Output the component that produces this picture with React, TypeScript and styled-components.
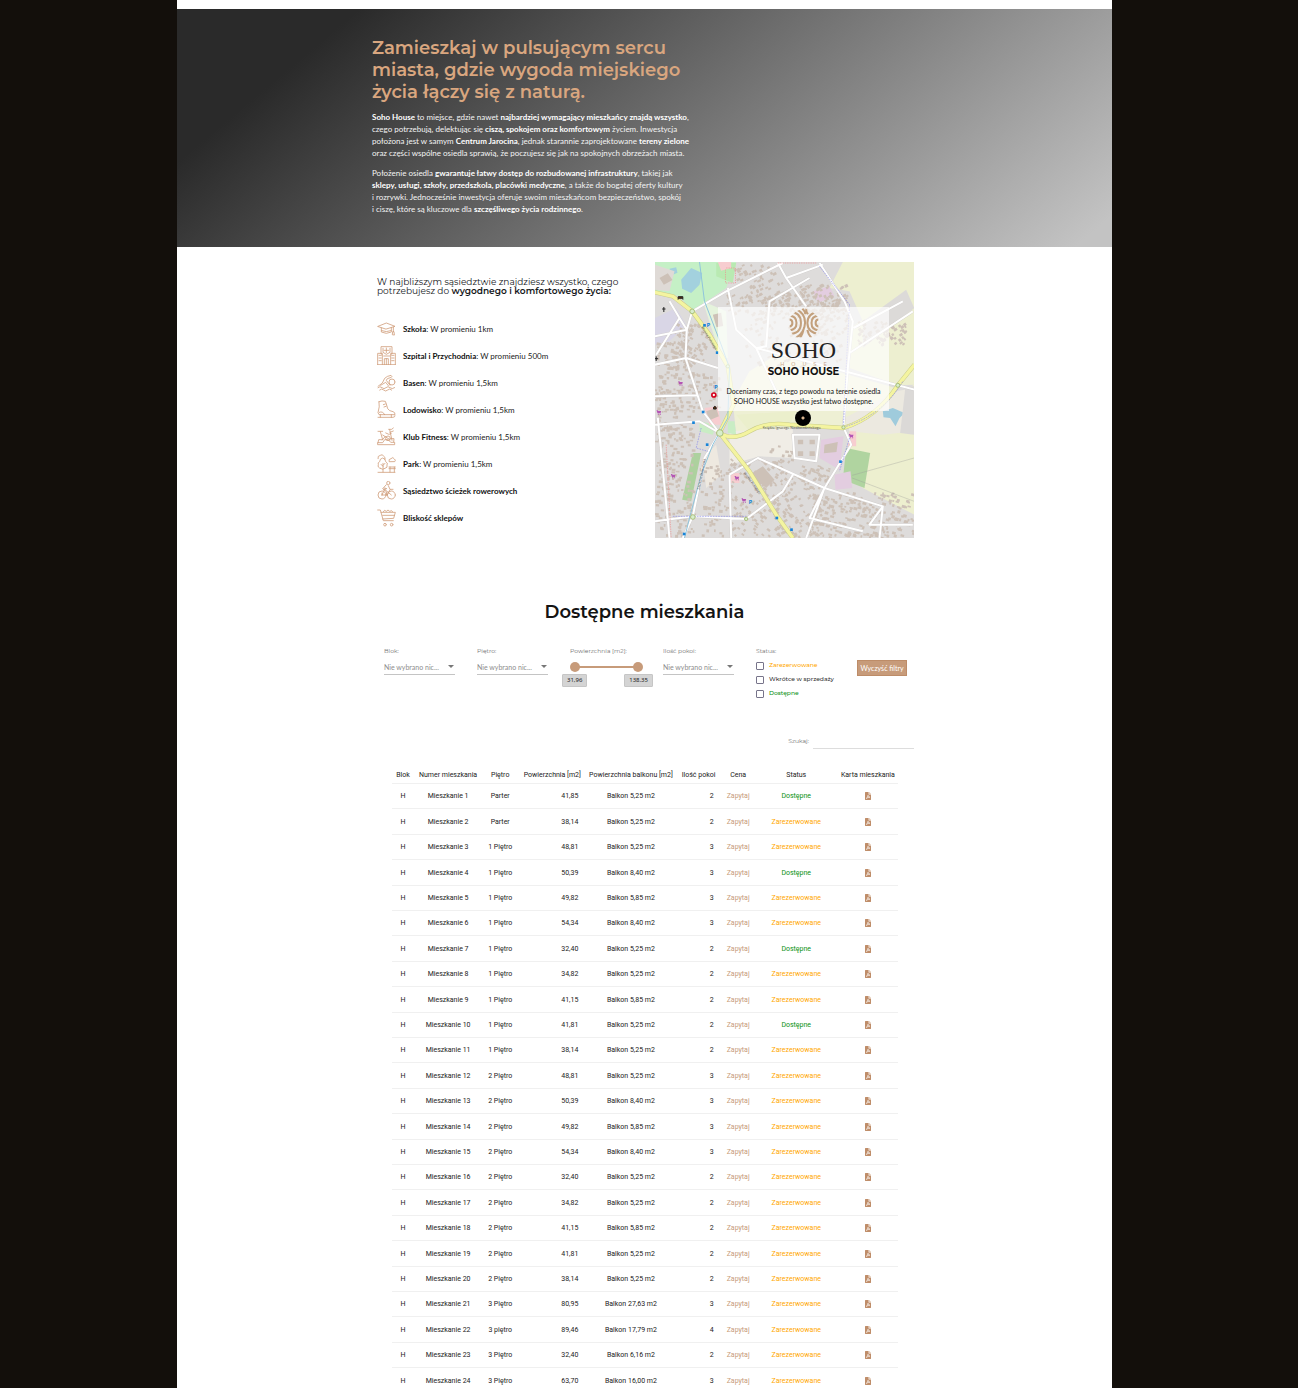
import React, { useState } from "react";
import styled, { createGlobalStyle } from "styled-components";

const display = `Montserrat, Inter, "Open Sans", sans-serif`;
const body = `Lato, "Open Sans", sans-serif`;
const tan = "#c79b7a";

const GlobalStyle = createGlobalStyle`
  * { box-sizing: border-box; }
  body { margin: 0; background: #130f0b; font-family: ${body}; }
  h1, h2, h3, p, ul { margin: 0; padding: 0; }
`;

const Shell = styled.div`
  padding: 0 186px 0 177px;
  @media (max-width: 960px) { padding: 0; }
`;
const Page = styled.main`
  background: #fff;
  padding-top: 9px;
`;
const Container = styled.div`
  max-width: 545px;
  margin: 0 auto;
`;

const Hero = styled.section`
  padding: 28px 0 32px;
  background: linear-gradient(140deg, #2a2a2a 15%, #c3c3c3 97%);
`;
const HeroTitle = styled.h1`
  color: #d9a67f;
  font: 600 18px/22px ${display};
  white-space: nowrap;
`;
const HeroText = styled.p`
  margin-top: 8px;
  color: #f4f4f4;
  font-size: 8px;
  line-height: 12px;
  white-space: nowrap;
  b { color: #fff; }
`;

const Nearby = styled.section`
  padding-top: 15px;
`;
const NearbyRow = styled(Container)`
  display: flex;
  justify-content: space-between;
  align-items: flex-start;
  padding: 0 3px 0 5px;
`;
const NearbyTitle = styled.h3`
  margin-top: 15px;
  color: #16181b;
  font: 400 9px/9px ${display};
  white-space: nowrap;
  b { font-weight: 600; }
`;
const PlaceList = styled.ul`
  margin-top: 20px;
  list-style: none;
`;
const Place = styled.li`
  display: flex;
  align-items: center;
  gap: 7px;
  height: 27px;
  color: #222;
  font-size: 8px;
  b { color: #111; }
`;
const PlaceIcon = styled.svg`
  width: 19px;
  height: 19px;
  fill: none;
  stroke: #cf9c78;
  stroke-width: 2.4;
  stroke-linejoin: round;
  stroke-linecap: round;
`;

const MapCard = styled.div`
  position: relative;
  flex: 0 0 auto;
  width: 259px;
  height: 276px;
  overflow: hidden;
`;
const MapArt = styled.svg`
  display: block;
  width: 100%;
  height: 100%;
`;
const MapPopup = styled.div`
  position: absolute;
  top: 45px;
  left: 63px;
  width: 171px;
  height: 104px;
  display: flex;
  flex-direction: column;
  align-items: center;
  padding-top: 1px;
  background: rgba(255, 255, 255, 0.68);
  color: #111;
  text-align: center;
`;
const LogoMark = styled.svg`
  width: 30px;
  height: 30px;
`;
const LogoName = styled.span`
  color: #222;
  font: 400 24px/24px "Liberation Serif", serif;
`;
const LogoSub = styled.span`
  color: #c9a88b;
  font: 500 5px/4px ${display};
  letter-spacing: 7px;
  padding-left: 7px;
`;
const PopupTitle = styled.h3`
  font: 700 10px/11px ${display};
`;
const PopupText = styled.p`
  margin-top: 9px;
  font-size: 7px;
  line-height: 10px;
  white-space: nowrap;
`;
const Pin = styled.span`
  position: absolute;
  top: 148px;
  left: 140px;
  width: 16px;
  height: 16px;
  border-radius: 50%;
  background: radial-gradient(circle, #d9b48f 0 1px, #000 2px);
`;

const Flats = styled.section`
  padding-top: 62px;
`;
const FlatsTitle = styled.h2`
  color: #141414;
  text-align: center;
  font: 600 18px/24px ${display};
`;
const Filters = styled.form`
  display: grid;
  grid-template-columns: repeat(5, 93px) 1fr;
  margin-top: 22px;
  padding-left: 12px;
  height: 60px;
`;
const Field = styled.div`
  display: flex;
  flex-direction: column;
  align-items: flex-start;
  min-width: 0;
  color: #6e6e6e;
  font: 400 6px/10px ${display};
`;
const StatusField = styled.fieldset`
  margin: 0;
  padding: 0;
  border: 0;
  color: #6e6e6e;
  font: 400 6px/10px ${display};
  legend { padding: 0; margin-bottom: 2px; }
`;
const SelectBox = styled.span`
  position: relative;
  width: 71px;
  margin-top: 5px;
  border-bottom: 1px solid #c4c4c4;
  &::after {
    content: "";
    position: absolute;
    top: 4px;
    right: 1px;
    border: 3px solid transparent;
    border-top-color: #777;
    border-bottom: 0;
  }
`;
const Select = styled.select`
  appearance: none;
  display: block;
  width: 100%;
  height: 13px;
  padding: 0;
  border: 0;
  background: none;
  color: #8d8d8d;
  font: 400 7px/13px ${body};
`;
const Slider = styled.div`
  position: relative;
  width: 73px;
  height: 12px;
  margin-top: 5px;
  background: linear-gradient(${tan}, ${tan}) center / 63px 2px no-repeat;
`;
const Range = styled.input`
  appearance: none;
  position: absolute;
  inset: 0;
  width: 100%;
  height: 12px;
  margin: 0;
  background: none;
  pointer-events: none;
  &::-webkit-slider-thumb {
    appearance: none;
    width: 10px;
    height: 10px;
    border-radius: 50%;
    background: ${tan};
    pointer-events: auto;
  }
`;
const Bubbles = styled.div`
  display: flex;
  justify-content: space-between;
  align-self: stretch;
  margin: 1px 10px 0 -8px;
`;
const Bubble = styled.output`
  padding: 0 4px;
  border: 1px solid #c6c6c6;
  border-radius: 1px;
  background: #d4d4d4;
  color: #222;
  font: 400 6px/11px "Noto Sans", sans-serif;
`;
const colors = { free: "#0a9212", taken: "#ffa800", soon: "#333" };
type Tone = keyof typeof colors;
const Check = styled.label<{ $tone: Tone }>`
  display: flex;
  align-items: center;
  gap: 5px;
  height: 14px;
  color: ${(p) => colors[p.$tone]};
  font-weight: 500;
  white-space: nowrap;
  input {
    appearance: none;
    width: 8px;
    height: 8px;
    margin: 2px 0 0;
    border: 1px solid #77748a;
    border-radius: 1px;
    background: #fff;
  }
  input:checked { background: ${tan}; }
`;
const ClearButton = styled.button`
  justify-self: start;
  align-self: start;
  width: 50px;
  height: 16px;
  margin: 14px 0 0 8px;
  padding: 0;
  border: 1px solid #bd8c68;
  background: ${tan};
  color: #fff;
  font: 400 7px/12px ${body};
  white-space: nowrap;
`;
const Search = styled.label`
  display: flex;
  justify-content: flex-end;
  align-items: center;
  gap: 4px;
  margin-top: 26px;
  padding-right: 3px;
  color: #6e6e6e;
  font: 400 6px/10px ${display};
  input {
    width: 101px;
    height: 17px;
    padding: 0;
    border: 0;
    border-bottom: 1px solid #ddd;
    outline: 0;
    font: 400 7px/10px ${body};
  }
`;

const Table = styled.table`
  width: calc(100% - 39px);
  margin: 17px 19px 0 20px;
  border-collapse: separate;
  border-spacing: 0;
  table-layout: fixed;
  color: #222;
  font: 400 7px/10px Roboto, sans-serif;
  th, td {
    padding: 0;
    border-bottom: 1px solid #f0f0f0;
    text-align: center;
    font-weight: 400;
    white-space: nowrap;
  }
  th { height: 18px; }
  td { height: 25px; }
  tbody tr:nth-child(5n + 2) td,
  tbody tr:nth-child(5n + 4) td { height: 26px; }
`;
const NumberCell = styled.td`
  && { padding-right: 8px; text-align: right; }
`;
const Ask = styled.a`
  color: ${tan};
  text-decoration: none;
`;
const Status = styled.span<{ $tone: Tone }>`
  color: ${(p) => colors[p.$tone]};
`;
const FileLink = styled.a`
  display: flex;
  justify-content: center;
  svg { width: 6px; height: 8px; }
`;

const places: { icon: string; name: string; note?: string }[] = [
  { icon: "M3 22 28 12 54 22 28 30ZM13 27v12q15 8 30 0V26M14 35q14 6 28 0M49 24v14M46 46l1-8h4l1 9Z", name: "Szkoła", note: "W promieniu 1km" },
  { icon: "M16 56V24h-4V2h33v22h-4v32M2 56V22h14M55 56V22H41M2 56h53M28 6v14M21 13h14M18 7v12l10 6 11-6V7M6 28h7M6 36h7M6 44h7M44 28h7M44 36h7M44 44h7M22 56V38h12v18M28 38v18M20 30h18", name: "Szpital i Przychodnia", note: "W promieniu 500m" },
  { icon: "M3 40 16 30 23 16Q30 9 42 7q5 3 1 6L31 17 28 22 39 37M11 37l15-9 8 10M54 27a9 9 0 1 1-18 0 9 9 0 0 1 18 0M3 44q6-6 12 0t12 0 12 0 14 0M8 51q6-6 12 0t12 0 12 0", name: "Basen", note: "W promieniu 1,5km" },
  { icon: "M6 5q9-4 19-1l3 8 4 14q4 7 16 9 7 2 6 9H6l-3-6Q9 20 6 5M7 37q10-5 16 7M25 12l-6 2M27 19l-6 2M10 44v8M43 44v8M3 52h45q6 0 6-5", name: "Lodowisko", note: "W promieniu 1,5km" },
  { icon: "M3 13h14M10 14l7 24H5l-2 9M17 24 39 38M35 7h9l5-4M38 8l7 32M26 18q11 8 17 2M49 12l-10 4M3 47h14l6-9h11l7 8h12v7H3ZM40 34a7 7 0 1 1-14 0 7 7 0 0 1 14 0M25 28l-9 11M42 35h9l-1 10", name: "Klub Fitness", note: "W promieniu 1,5km" },
  { icon: "M3 14q-2-9 7-10 7-5 10 3 7 3 4 9M18 54V28M10 43q-9-2-6-11-3-6 4-9 0-9 9-11 9 2 9 11 8 4 4 10 3 8-6 10Q17 49 10 43M18 37l-6-6M18 34l6-6M3 55h51M36 22q-2-7 6-8 6-7 10 1 6 3 2 7ZM36 44h19M36 39h19M39 39v15M52 39v15", name: "Park", note: "W promieniu 1,5km" },
  { icon: "M27 42a12 12 0 1 1-24 0 12 12 0 0 1 24 0M55 42a12 12 0 1 1-24 0 12 12 0 0 1 24 0M15 42l8-17 20 17M15 42h16l8-16M39 6a5 5 0 1 1-10 0 5 5 0 0 1 10 0M28 11 17 23l12 10-1 9M34 14l5 11h9M29 23l-6-2M20 24h6M15 36v6", name: "Sąsiedztwo ścieżek rowerowych" },
  { icon: "M2 6h8l9 32h30M12 13h43l-5 18-33 2M17 22h35M19 11q3-8 9-1 5-8 10 0 7-5 9 1M28 50a4 4 0 1 1-8 0 4 4 0 0 1 8 0M48 50a4 4 0 1 1-8 0 4 4 0 0 1 8 0", name: "Bliskość sklepów" },
];

/* Street map: blocks, fields, roads and small houses */
const houses: { x: number; y: number; w: number; h: number; r: number }[] = [];
(() => {
  let seed = 11;
  const rnd = () => (seed = (seed * 16807) % 2147483647) / 2147483647;
  const zones = [
    [230, 110, 330, 60, -25, 130], [270, 150, 300, 180, -25, 110], [16, 330, 115, 500, 3, 300], [60, 190, 110, 130, 30, 90],
    [20, 250, 90, 80, 8, 50], [240, 600, 180, 230, 38, 170], [380, 710, 130, 125, -30, 80], [490, 700, 300, 135, 15, 220],
    [620, 190, 150, 70, -35, 80], [130, 340, 80, 110, 5, 40], [150, 620, 80, 210, 5, 60], [440, 80, 150, 150, -28, 110],
    [360, 560, 70, 50, 10, 12], [280, 60, 140, 80, -28, 50], [250, 20, 120, 50, -28, 30], [420, 620, 120, 70, 18, 50],
  ];
  zones.forEach(([x, y, w, h, r, n]) => {
    for (let i = 0; i < n; i++)
      houses.push({ x: Math.round(x + rnd() * w), y: Math.round(y + rnd() * h), w: 5 + Math.round(rnd() * 7), h: 5 + Math.round(rnd() * 4), r });
  });
})();

const whiteRoads = [
  "M128 160 230 100 400 15", "M128 160 112 215 108 300 160 460 210 525", "M16 235 112 215", "M16 320 110 300 205 330",
  "M16 415 145 412", "M16 500 150 490 210 525", "M25 480 60 840", "M235 90 260 215 320 270 380 400", "M320 270 350 265 360 130 480 60",
  "M385 15 410 60 470 145 M410 60 520 20", "M510 15 585 130 610 190 595 330 582 508", "M320 270 745 382", "M600 285 790 160", "M612 210 760 130",
  "M210 525 165 600 130 775 100 840", "M16 790 130 775 290 783 400 700 430 650", "M582 508 605 560 525 690 470 840",
  "M240 650 325 600 525 690 700 745 690 840", "M240 650 245 840", "M525 690 480 780 640 820M700 745 660 800 790 800", "M745 382 795 395",
  "M60 130 90 180 112 215M90 180 20 290", "M430 530 510 530 500 610 435 600Z",
];
const yellowRoads = [
  "M16 103 70 115 128 160 180 230 235 325 252 440 210 525", "M210 525Q250 550 300 520T420 500L582 510Q680 480 745 382L795 320", "M210 525 300 640 380 770 430 840",
];

function MapPicture() {
  return (
    <MapArt viewBox="16 12 778 828" preserveAspectRatio="xMidYMid slice" role="img" aria-label="Mapa okolicy">
      <rect x="16" y="12" width="778" height="828" fill="#dedcdb" />
      <path d="M580 12H794V100L640 190 600 100 540 90Z" fill="#edefd0" />
      <path d="M610 205 794 90V380L745 382 600 330Z" fill="#edefd0" />
      <path d="M640 190 770 95 794 150 640 270Z" fill="#dcdad8" />
      <path d="M600 520 794 380V770L640 690 590 640Z" fill="#edefcf" />
      <path d="M380 290 740 390 680 480 582 508 460 505 260 530 250 430 300 340Z" fill="#eef0d4" />
      <path d="M260 470 440 460 420 500 300 520Z" fill="#ebefcc" />
      <path d="M585 480 740 400 794 390V520L700 530 600 520Z" fill="#ece9e0" />
      <path d="M16 12H260L230 90 128 160 90 115 16 100Z" fill="#c5f0c6" />
      <path d="M200 15h60l-10 60-50-20Z" fill="#b9eab2" />
      <path d="M95 65 125 30 158 45 150 80 125 105 98 92ZM60 32l20-4 4 16-18 8Z" fill="#a3d1de" />
      <path d="M16 20 75 40 60 100 16 95Z" fill="#dfdad6" />
      <path d="M16 180 80 150 110 200 60 250 16 260Z" fill="#d9d6e6" />
      <path d="M160 130 230 160 235 300 215 300Z" fill="#e5f3dc" />
      <path d="M240 520 430 510 430 600 330 595 240 620Z" fill="#f0ede6" />
      <path d="M160 600 200 560 215 650 170 690Z" fill="#eee9e0" />
      <path d="M130 585H155L125 730 98 725Z" fill="#add19e" />
      <path d="M590 570 662 585 645 690 580 665Z" fill="#b0d4a0" />
      <path d="M515 545 582 535 570 635 510 600ZM555 650l48-10 5 50-50 5Z" fill="#e3cde0" />
      <path d="M490 100l50-15 15 30-50 20Z" fill="#e3cde0" />
      <path d="M150 490 200 500 190 530 150 520ZM235 490l20 0 5 40-25-5Z" fill="#c9edc4" />
      <path d="M165 450 205 445 215 500 180 500ZM240 645l30 0 0 30-30 0ZM600 520l20 0 0 45-25 0ZM205 12l40 0 0 18-30 8Z" fill="#f7cdd0" />
      <path d="M700 460 730 450 765 465 750 480 738 505 722 480 702 478Z" fill="#9fcbdc" />
      <path d="M768 385H794V530L752 525Z" fill="#dbd9d7" />
      <g fill="#cdc1b7">
        {houses.map((b, i) => (
          <rect key={i} x={b.x} y={b.y} width={b.w} height={b.h} transform={`rotate(${b.r} ${b.x} ${b.y})`} />
        ))}
        <path d="M300 650 340 625 375 665 350 690ZM445 545h16v14h-16ZM480 545h16v14h-16ZM445 580h16v14h-16ZM480 580h16v14h-16ZM170 460l30-10 8 25-28 12ZM190 170l25-6 6 40-20 4ZM525 560l40-8-4 30-38 4ZM30 60l25-14 14 20-26 14Z" />
      </g>
      <g fill="none" strokeLinejoin="round">
        <path d={whiteRoads.join("")} stroke="#cfcccb" strokeWidth="8" />
        <path d={whiteRoads.join("")} stroke="#fff" strokeWidth="6" />
        <path d={yellowRoads.join("")} stroke="#c9cc8a" strokeWidth="13" />
        <path d={yellowRoads.join("")} stroke="#f4f4a0" strokeWidth="10" />
        <path d="M150 12 165 130 215 260 240 330 235 480 190 560 155 650 120 780 105 840" stroke="#8fc4dc" strokeWidth="3" />
        <path d="M510 25 600 140 590 330 582 500M600 540 570 640M155 510 140 570 175 580M70 775H290M590 505Q700 470 760 370" stroke="#8b8bea" strokeWidth="2" strokeDasharray="5 3" />
        <path d="M50 560 65 840M385 15 500 15M230 30h28v45h-30v-40" stroke="#ee8f8f" strokeWidth="2" strokeDasharray="4 3" />
        <path d="M608 652 794 600M608 660 794 730" stroke="#999" strokeWidth="1" />
      </g>
      <g fill="#d8eecb" stroke="#a9bf7a" strokeWidth="3">
        <circle cx="128" cy="160" r="7" /><circle cx="211" cy="525" r="10" /><circle cx="130" cy="777" r="7" />
        <circle cx="235" cy="325" r="5" /><circle cx="582" cy="508" r="5" /><circle cx="745" cy="382" r="6" /><circle cx="290" cy="783" r="5" />
      </g>
      <g fill="#1683d8">
        {[[165, 202], [203, 284], [132, 494], [161, 462], [173, 560], [573, 611], [382, 780], [426, 815], [104, 828]].map(([x, y]) => (
          <rect key={x} x={x - 4} y={y - 4} width="8" height="8" />
        ))}
      </g>
      <g fill="#b455b4">
        {[[93, 376], [28, 463], [71, 654], [262, 660], [283, 727], [605, 534]].map(([x, y]) => (
          <path key={x} d={`M${x - 7} ${y - 6}h4l1 2h9l-2 7h-9zM${x - 3} ${y + 4}h3v3h-3zM${x + 3} ${y + 4}h3v3h-3z`} />
        ))}
      </g>
      <path d="M38 153h10M43 147v15M16 302h10M20 295v14M86 124v-8h14v8l-3-3h-8ZM192 453v-5l4-3 4 3v5Z" fill="#5b2d0a" stroke="#222" strokeWidth="3" />
      <circle cx="193" cy="411" r="6" fill="#fff" stroke="#d6001c" strokeWidth="5" />
      <g fill="#1683d8" fontFamily="Inter, sans-serif" fontSize="16" fontWeight="700">
        <text x="194" y="393">P</text><text x="298" y="737">P</text><text x="172" y="208">P</text>
      </g>
      <g fill="#444" fontFamily="Open Sans, sans-serif" fontSize="10">
        <text x="340" y="513">Księdza Ignacego Niedźwiedzińskiego</text>
        <text transform="translate(282 645) rotate(54)">Wojska Polskiego</text>
        <text transform="translate(155 208) rotate(58)">Wojska Polskiego</text>
        <text transform="translate(150 695) rotate(-79)">Zaciszna Bulwarowa</text>
      </g>
    </MapArt>
  );
}

function SohoMark() {
  return (
    <LogoMark viewBox="0 0 88 88" fill="none" stroke="#c3a07c" strokeWidth="6" aria-hidden="true">
      <defs>
        <clipPath id="mark"><path d="M2 28 20 10 44 0 68 10 86 28V58L74 86H14L2 58Z" /></clipPath>
      </defs>
      <g clipPath="url(#mark)">
        <path d="M0 34q10 0 10 10T0 54M0 23q22 0 22 21T0 65M2 12q33 0 33 32T0 76" />
        <path d="M88 34q-10 0-10 10t10 10M88 23q-22 0-22 21t22 21M86 12q-32 4-32 32t34 32" />
        <path d="M22 4q26 12 25 40T20 88M38 0q10 10 10 18M52 0q-4 10 4 18M44 58q-4 20-12 30M54 64q2 14 12 24" />
      </g>
    </LogoMark>
  );
}

const T = "Zarezerwowane";
const D = "Dostępne";
const flats: [string, string, string, number, string][] = [
  ["Parter", "41,85", "5,25", 2, D], ["Parter", "38,14", "5,25", 2, T], ["1 Piętro", "48,81", "5,25", 3, T],
  ["1 Piętro", "50,39", "8,40", 3, D], ["1 Piętro", "49,82", "5,85", 3, T], ["1 Piętro", "54,34", "8,40", 3, T],
  ["1 Piętro", "32,40", "5,25", 2, D], ["1 Piętro", "34,82", "5,25", 2, T], ["1 Piętro", "41,15", "5,85", 2, T],
  ["1 Piętro", "41,81", "5,25", 2, D], ["1 Piętro", "38,14", "5,25", 2, T], ["2 Piętro", "48,81", "5,25", 3, T],
  ["2 Piętro", "50,39", "8,40", 3, T], ["2 Piętro", "49,82", "5,85", 3, T], ["2 Piętro", "54,34", "8,40", 3, T],
  ["2 Piętro", "32,40", "5,25", 2, T], ["2 Piętro", "34,82", "5,25", 2, T], ["2 Piętro", "41,15", "5,85", 2, T],
  ["2 Piętro", "41,81", "5,25", 2, T], ["2 Piętro", "38,14", "5,25", 2, T], ["3 Piętro", "80,95", "27,63", 3, T],
  ["3 piętro", "89,46", "17,79", 4, T], ["3 Piętro", "32,40", "6,16", 2, T], ["3 Piętro", "63,70", "16,00", 3, T],
];
const columns: [string, number][] = [
  ["Blok", 22], ["Numer mieszkania", 68], ["Piętro", 36], ["Powierzchnia [m2]", 68], ["Powierzchnia balkonu [m2]", 89],
  ["Ilość pokoi", 46], ["Cena", 33], ["Status", 83], ["Karta mieszkania", 60],
];

function Dropdown({ id, label }: { id: string; label: string }) {
  return (
    <Field>
      <label htmlFor={id}>{label}</label>
      <SelectBox>
        <Select id={id}><option>Nie wybrano nic...</option></Select>
      </SelectBox>
    </Field>
  );
}

export default function App() {
  const [low, setLow] = useState(31.96);
  const [high, setHigh] = useState(138.35);
  const range = { type: "range", min: 31.96, max: 138.35, step: 0.01 };
  return (
    <Shell>
      <GlobalStyle />
      <Page>
        <Hero>
          <Container>
            <HeroTitle>
              Zamieszkaj w pulsującym sercu<br />miasta, gdzie wygoda miejskiego<br />życia łączy się z naturą.
            </HeroTitle>
            <HeroText>
              <b>Soho House</b> to miejsce, gdzie nawet <b>najbardziej wymagający mieszkańcy znajdą wszystko</b>,<br />
              czego potrzebują, delektując się <b>ciszą, spokojem oraz komfortowym</b> życiem. Inwestycja<br />
              położona jest w samym <b>Centrum Jarocina</b>, jednak starannie zaprojektowane <b>tereny zielone</b><br />
              oraz części wspólne osiedla sprawią, że poczujesz się jak na spokojnych obrzeżach miasta.
            </HeroText>
            <HeroText>
              Położenie osiedla <b>gwarantuje łatwy dostęp do rozbudowanej infrastruktury</b>, takiej jak<br />
              <b>sklepy, usługi, szkoły, przedszkola, placówki medyczne</b>, a także do bogatej oferty kultury<br />
              i rozrywki. Jednocześnie inwestycja oferuje swoim mieszkańcom bezpieczeństwo, spokój<br />
              i ciszę, które są kluczowe dla <b>szczęśliwego życia rodzinnego</b>.
            </HeroText>
          </Container>
        </Hero>

        <Nearby>
          <NearbyRow>
            <div>
              <NearbyTitle>
                W najbliższym sąsiedztwie znajdziesz wszystko, czego<br />potrzebujesz do <b>wygodnego i komfortowego życia:</b>
              </NearbyTitle>
              <PlaceList>
                {places.map((p) => (
                  <Place key={p.name}>
                    <PlaceIcon viewBox="0 0 57 57" aria-hidden="true"><path d={p.icon} /></PlaceIcon>
                    <span><b>{p.name}</b>{p.note && `: ${p.note}`}</span>
                  </Place>
                ))}
              </PlaceList>
            </div>
            <MapCard>
              <MapPicture />
              <MapPopup>
                <SohoMark />
                <LogoName>SOHO</LogoName>
                <LogoSub>HOUSE</LogoSub>
                <PopupTitle>SOHO HOUSE</PopupTitle>
                <PopupText>Doceniamy czas, z tego powodu na terenie osiedla<br />SOHO HOUSE wszystko jest łatwo dostępne.</PopupText>
              </MapPopup>
              <Pin />
            </MapCard>
          </NearbyRow>
        </Nearby>

        <Flats>
          <Container>
            <FlatsTitle>Dostępne mieszkania</FlatsTitle>
            <Filters>
              <Dropdown id="block" label="Blok:" />
              <Dropdown id="floor" label="Piętro:" />
              <Field>
                <label htmlFor="area-min">Powierzchnia [m2]:</label>
                <Slider>
                  <Range {...range} id="area-min" value={low} onChange={(e) => setLow(Math.min(+e.target.value, high))} />
                  <Range {...range} aria-label="Powierzchnia maksymalna" value={high} onChange={(e) => setHigh(Math.max(+e.target.value, low))} />
                </Slider>
                <Bubbles>
                  <Bubble>{low.toFixed(2).replace(".", ",")}</Bubble>
                  <Bubble>{high.toFixed(2)}</Bubble>
                </Bubbles>
              </Field>
              <Dropdown id="rooms" label="Ilość pokoi:" />
              <StatusField>
                <legend>Status:</legend>
                <Check $tone="taken"><input type="checkbox" />Zarezerwowane</Check>
                <Check $tone="soon"><input type="checkbox" />Wkrótce w sprzedaży</Check>
                <Check $tone="free"><input type="checkbox" />Dostępne</Check>
              </StatusField>
              <ClearButton type="reset">Wyczyść filtry</ClearButton>
            </Filters>
            <Search>Szukaj:<input type="search" /></Search>
            <Table>
              <colgroup>{columns.map(([name, w]) => <col key={name} width={w} />)}</colgroup>
              <thead>
                <tr>{columns.map(([name]) => <th key={name} scope="col">{name}</th>)}</tr>
              </thead>
              <tbody>
                {flats.map(([floor, area, balcony, rooms, status], i) => (
                  <tr key={i}>
                    <td>H</td>
                    <td>Mieszkanie {i + 1}</td>
                    <td>{floor}</td>
                    <NumberCell>{area}</NumberCell>
                    <td>Balkon {balcony} m2</td>
                    <NumberCell>{rooms}</NumberCell>
                    <td><Ask href="#ask">Zapytaj</Ask></td>
                    <td><Status $tone={status === D ? "free" : "taken"}>{status}</Status></td>
                    <td>
                      <FileLink href="#card" aria-label={`Karta mieszkania ${i + 1}`}>
                        <svg viewBox="0 0 15 20">
                          <path d="M0 1q0-1 1-1h8v6h6v13q0 1-1 1H1q-1 0-1-1Z" fill="#bf8d69" />
                          <path d="M10.500 0 15 4.500h-4.500Z" fill="#d5ad90" />
                          <path d="M3 16q4-2 4.500-8 1 5 5 5-5 0-9.500 3" fill="none" stroke="#fff" strokeWidth="1.500" />
                        </svg>
                      </FileLink>
                    </td>
                  </tr>
                ))}
              </tbody>
            </Table>
          </Container>
        </Flats>
      </Page>
    </Shell>
  );
}
